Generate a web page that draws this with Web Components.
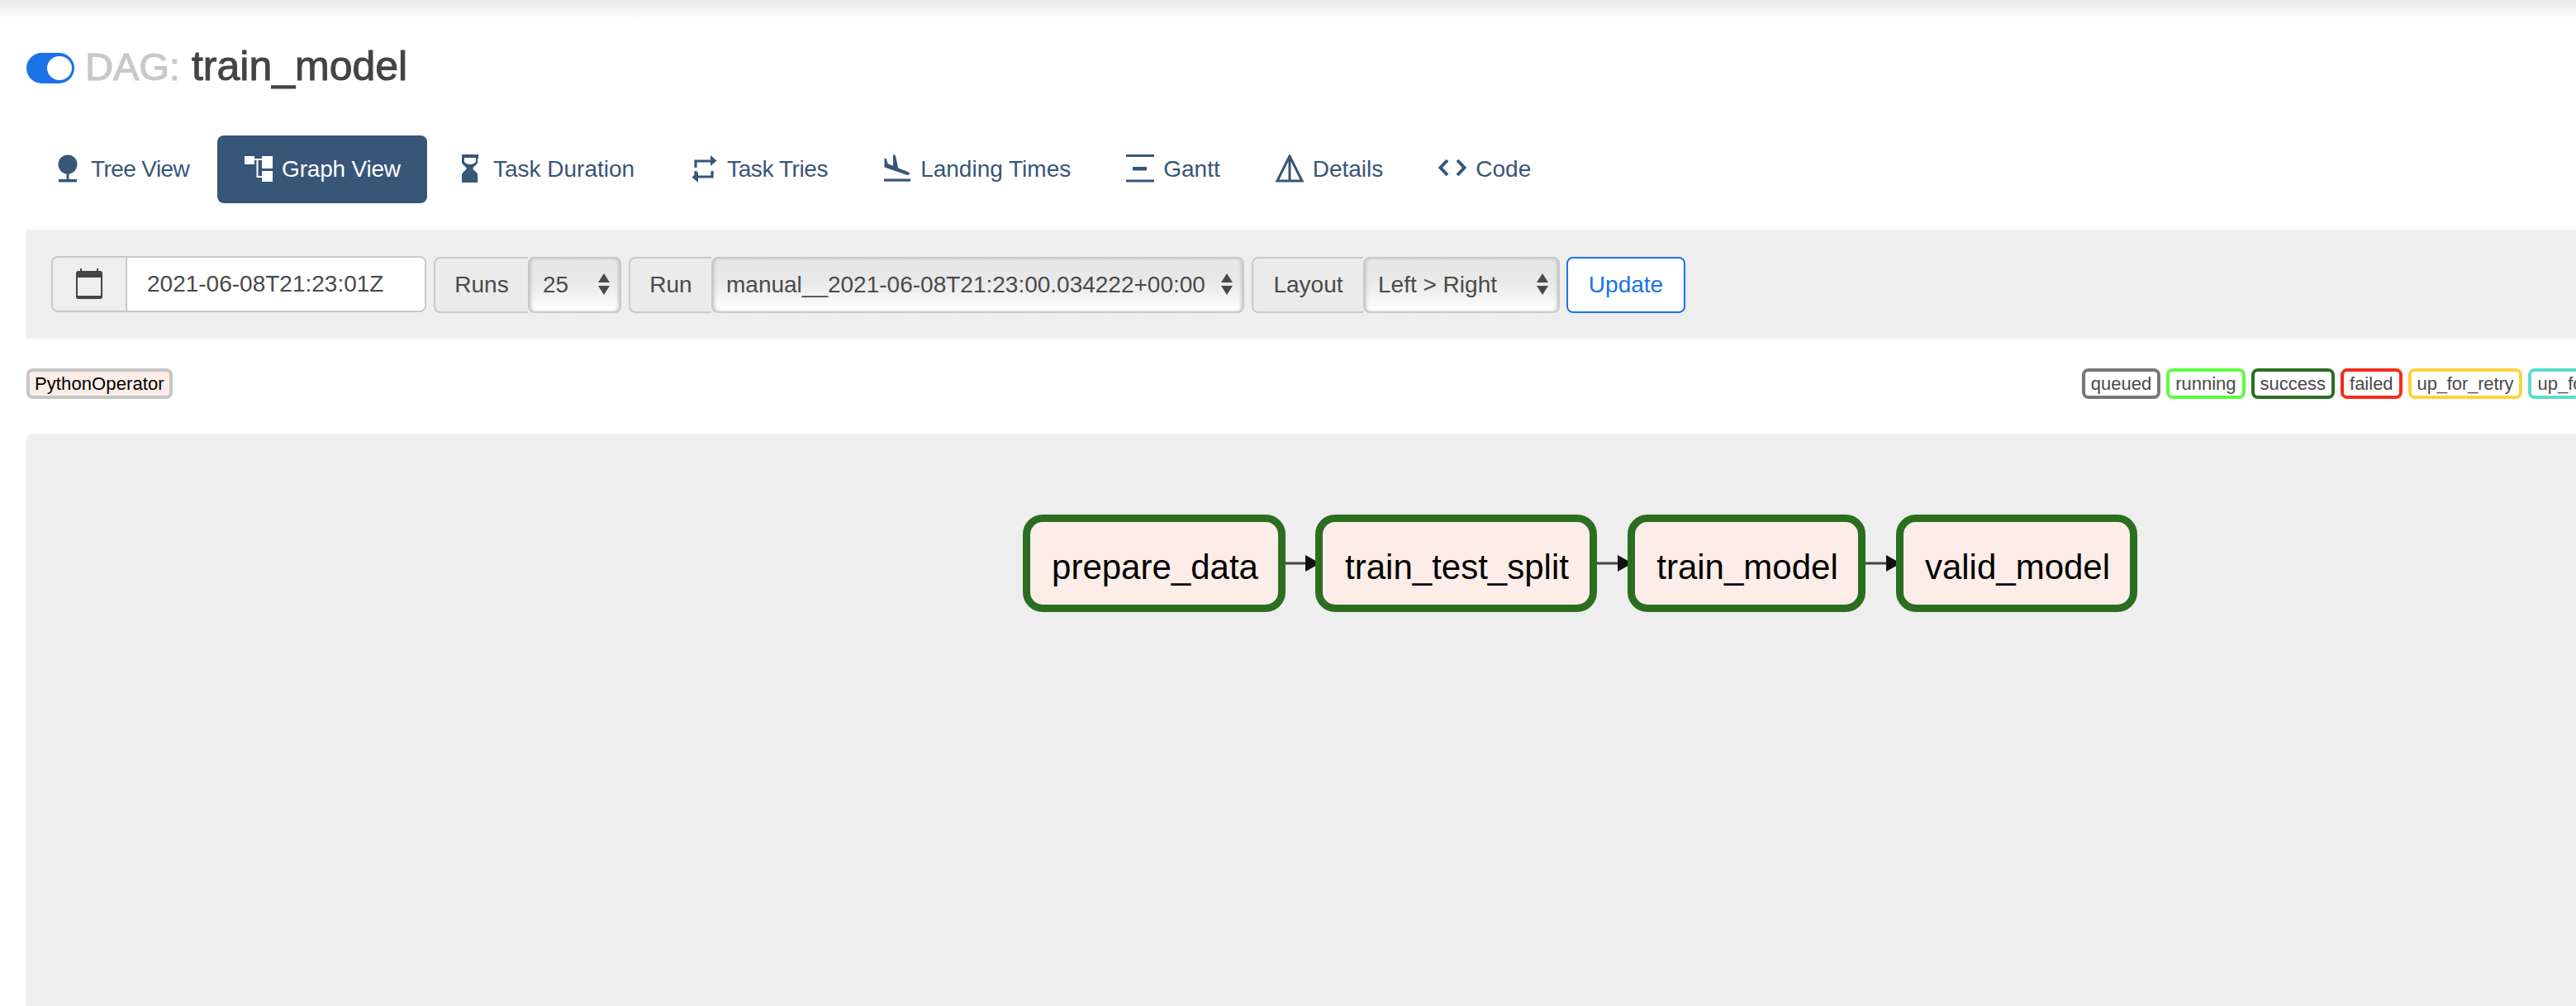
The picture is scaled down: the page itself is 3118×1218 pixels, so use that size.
<!DOCTYPE html>
<html>
<head>
<meta charset="utf-8">
<title>train_model</title>
<style>
    html, body { margin: 0; padding: 0; background: #fff; overflow: hidden; }
    body { width: 3118px; height: 1218px; font-family: "Liberation Sans", Arial, sans-serif; color: #4a4a4a; }
</style>
</head>
<body>
<af-page>
    <af-header dag="train_model"></af-header>
    <af-tabs>
        <af-tab icon="tree" style="letter-spacing: -.6px">Tree View</af-tab>
        <af-tab icon="graph" active style="letter-spacing: -.2px">Graph View</af-tab>
        <af-tab icon="hourglass">Task Duration</af-tab>
        <af-tab icon="repeat" style="letter-spacing: -.4px">Task Tries</af-tab>
        <af-tab icon="plane">Landing Times</af-tab>
        <af-tab icon="gantt">Gantt</af-tab>
        <af-tab icon="sail">Details</af-tab>
        <af-tab icon="code">Code</af-tab>
    </af-tabs>
    <af-filter>
        <af-date value="2021-06-08T21:23:01Z"></af-date>
        <af-select label="Runs" label-width="114" width="113">25</af-select>
        <af-select label="Run" label-width="100" width="645">manual__2021-06-08T21:23:00.034222+00:00</af-select>
        <af-select label="Layout" label-width="135" width="238">Left &gt; Right</af-select>
        <af-button>Update</af-button>
    </af-filter>
    <af-legend>
        <af-chip slot="left" color="#c5c5c5" fill="#fcede8" ink="#000" style="letter-spacing: .1px; padding: 0 6px">PythonOperator</af-chip>
        <af-chip color="#777777">queued</af-chip>
        <af-chip color="#5cff3f">running</af-chip>
        <af-chip color="#2b6e20">success</af-chip>
        <af-chip color="#f52d1c">failed</af-chip>
        <af-chip color="#ffd23c" style="letter-spacing: -.15px">up_for_retry</af-chip>
        <af-chip color="#5cdccb">up_for_reschedule</af-chip>
    </af-legend>
    <af-graph>
        <af-node x="1206" w="318">prepare_data</af-node>
        <af-edge x="1524" w="36"></af-edge>
        <af-node x="1560" w="341">train_test_split</af-node>
        <af-edge x="1901" w="37"></af-edge>
        <af-node x="1938" w="288">train_model</af-node>
        <af-edge x="2226" w="37"></af-edge>
        <af-node x="2263" w="292">valid_model</af-node>
    </af-graph>
</af-page>

<script>
const ICONS = {
    tree: `<circle cx="18" cy="12" r="11.5"/><rect x="16.5" y="22" width="3" height="9"/><rect x="7" y="30" width="22" height="3.5"/>`,
    graph: `<rect x="1" y="2" width="12" height="10"/><rect x="22" y="2" width="13" height="15"/><rect x="22" y="20" width="13" height="13"/><path d="M13 6h9M16.5 6v21h5.5" fill="none" stroke="currentColor" stroke-width="2"/>`,
    hourglass: `<path d="M8 0h20v4.500l-.8.5v4.500c0 3-5.700 5.200-5.700 7.500s5.700 4.500 5.700 7.500v9.500H8v-9.500c0-3 5.700-5.200 5.700-7.500S8 12.500 8 9.500V5L8 4.500zM11 4v4.500c0 1.500 3.500 3.500 7 3.500s7-2 7-3.500V4z" fill-rule="evenodd"/>`,
    repeat: `<path d="M8 16v-8h19M8 20v7h-.5M28 20v7H10" fill="none" stroke="currentColor" stroke-width="3.200"/><path d="M26 1l7.500 6.500-7.500 6.500zM11 21l-7.500 6.500L11 34z"/>`,
    plane: `<path d="M13 0l2.800 1 3.500 15.500 11.500 4.500c2.500 1 3 3.200 1.500 3.700-1.500.4-3.500-.2-5-.8L2.500 15.500V4.500l2.300.8 1.900 6 6.300 2.500z"/><rect x="2" y="29.500" width="32" height="3.200"/>`,
    gantt: `<rect x="1" y="0" width="34" height="3"/><rect x="9" y="15" width="17" height="4.500"/><rect x="1" y="30.500" width="34" height="3"/>`,
    sail: `<path d="M18 2L3 32h30zM18 2v30" fill="none" stroke="currentColor" stroke-width="3"/>`,
    code: `<path d="M12 7L3.500 16l8.500 9M24 7l8.500 9-8.500 9" fill="none" stroke="currentColor" stroke-width="4"/>`
};

class AfPage extends HTMLElement {
    constructor() {
        super();
        this.attachShadow({ mode: 'open' });
        this.shadowRoot.innerHTML = `
            <style>
                :host { display: block; height: 1218px; overflow: hidden; }
                .shade { height: 24px; background: linear-gradient(#e9e9e9, #fff); }
                main { padding: 0 0 0 32px; }
            </style>
            <div class="shade"></div>
            <main><slot></slot></main>
        `;
    }
}

class AfHeader extends HTMLElement {
    constructor() {
        super();
        this.attachShadow({ mode: 'open' });
        this.shadowRoot.innerHTML = `
            <style>
                :host { display: flex; align-items: center; height: 112px; gap: 13px; }
                .toggle {
                    box-sizing: border-box; width: 58px; height: 37px; margin-top: 4px;
                    border-radius: 19px; background: #1a73e8; position: relative;
                }
                .toggle i {
                    position: absolute; right: 3px; top: 4px; width: 30px; height: 29px;
                    border-radius: 50%; background: #fff;
                }
                h4 { margin: 0; font-size: 50px; font-weight: 400; line-height: 60px; color: #444; -webkit-text-stroke: 1px #444; white-space: nowrap; }
                h4 span { font-size: 47px; color: #c8c8c8; -webkit-text-stroke: 1px #c8c8c8; margin-right: 14px; }
            </style>
            <div class="toggle"><i></i></div>
            <h4><span>DAG:</span>${this.getAttribute('dag')}</h4>
        `;
    }
}

class AfTabs extends HTMLElement {
    constructor() {
        super();
        this.attachShadow({ mode: 'open' });
        this.shadowRoot.innerHTML = `
            <style>
                :host { display: flex; gap: 2px; margin-top: 28px; height: 82px; }
            </style>
            <slot></slot>
        `;
    }
}

class AfTab extends HTMLElement {
    constructor() {
        super();
        this.attachShadow({ mode: 'open' });
        this.shadowRoot.innerHTML = `
            <style>
                :host {
                    display: flex; align-items: center; gap: 10px; padding: 0 32px;
                    font-size: 28px; color: #375678; border-radius: 8px; white-space: nowrap;
                }
                :host([active]) { background: #375678; color: #fff; }
                svg { width: 36px; height: 36px; fill: currentColor; display: block; flex: none; }
            </style>
            <svg viewBox="0 0 36 36">${ICONS[this.getAttribute('icon')]}</svg>
            <slot></slot>
        `;
    }
}

class AfFilter extends HTMLElement {
    constructor() {
        super();
        this.attachShadow({ mode: 'open' });
        this.shadowRoot.innerHTML = `
            <style>
                :host {
                    display: flex; gap: 9px; align-items: center; box-sizing: border-box;
                    width: 3200px; height: 132px; margin-top: 32px; padding-left: 30px;
                    background: #eeeeee; font-size: 28px;
                }
            </style>
            <slot></slot>
        `;
    }
}

class AfDate extends HTMLElement {
    constructor() {
        super();
        this.attachShadow({ mode: 'open' });
        this.shadowRoot.innerHTML = `
            <style>
                :host {
                    display: flex; box-sizing: border-box; width: 454px; height: 68px;
                    border: 2px solid #c8c8c8; border-radius: 8px; overflow: hidden;
                }
                .addon {
                    box-sizing: border-box; width: 90px; background: #eeeeee; border-right: 2px solid #c8c8c8;
                    display: flex; align-items: center; justify-content: center;
                }
                .addon svg { width: 34px; height: 38px; display: block; }
                .value { flex: 1; background: #fff; display: flex; align-items: center; padding-left: 24px; color: #4a4a4a; }
            </style>
            <div class="addon">
                <svg viewBox="0 0 34 38">
                    <path d="M6 0h2v4H6zM26 0h2v4h-2z" fill="#444"/>
                    <rect x="1" y="3" width="32" height="34" rx="3" fill="#444"/>
                    <rect x="3" y="11" width="28" height="22" fill="#eeeeee"/>
                </svg>
            </div>
            <div class="value">${this.getAttribute('value')}</div>
        `;
    }
}

class AfSelect extends HTMLElement {
    constructor() {
        super();
        this.attachShadow({ mode: 'open' });
        this.shadowRoot.innerHTML = `
            <style>
                :host { display: flex; height: 68px; box-sizing: border-box; margin-top: 2px; }
                .label {
                    box-sizing: border-box; width: ${this.getAttribute('label-width')}px; height: 68px;
                    display: flex; align-items: center; justify-content: center;
                    background: #ebebeb; border: 2px solid #c8c8c8; border-right: 0; border-radius: 8px 0 0 8px;
                }
                .box {
                    box-sizing: border-box; width: ${this.getAttribute('width')}px; height: 68px;
                    display: flex; align-items: center; padding-left: 16px; position: relative; white-space: nowrap;
                    border: 2px solid #c8c8c8; border-radius: 8px;
                    background: linear-gradient(#e6e6e6 0, #e9e9e9 45%, #fff 100%);
                    box-shadow: inset 3px 0 4px -2px #bbb, inset -3px 0 4px -2px #bbb;
                }
                svg { position: absolute; right: 12px; top: 18px; width: 14px; height: 26px; fill: #4a4a4a; }
            </style>
            <div class="label">${this.getAttribute('label')}</div>
            <div class="box">
                <slot></slot>
                <svg viewBox="0 0 14 26"><path d="M7 0l7 11H0zM7 26L0 15h14z"/></svg>
            </div>
        `;
    }
}

class AfButton extends HTMLElement {
    constructor() {
        super();
        this.attachShadow({ mode: 'open' });
        this.shadowRoot.innerHTML = `
            <style>
                :host {
                    display: flex; align-items: center; justify-content: center; box-sizing: border-box;
                    width: 144px; height: 68px; margin: 2px 0 0 -1px; background: #fff; color: #1a73e8;
                    border: 2px solid #1a73e8; border-radius: 8px;
                }
            </style>
            <slot></slot>
        `;
    }
}

class AfLegend extends HTMLElement {
    constructor() {
        super();
        this.attachShadow({ mode: 'open' });
        this.shadowRoot.innerHTML = `
            <style>
                :host { display: flex; height: 37px; margin-top: 36px; width: 3300px; }
                .states { display: flex; gap: 7px; margin-left: 2311px; }
            </style>
            <slot name="left"></slot>
            <div class="states"><slot></slot></div>
        `;
    }
}

class AfChip extends HTMLElement {
    constructor() {
        super();
        this.attachShadow({ mode: 'open' });
        const fill = this.getAttribute('fill') || '#fff';
        const ink = this.getAttribute('ink') || '#4a4a4a';
        this.shadowRoot.innerHTML = `
            <style>
                :host {
                    display: flex; align-items: center; box-sizing: border-box; height: 37px; padding: 0 7px;
                    border: 4px solid ${this.getAttribute('color')}; border-radius: 8px;
                    background: ${fill}; color: ${ink}; font-size: 22px; white-space: nowrap;
                }
            </style>
            <slot></slot>
        `;
    }
}

class AfGraph extends HTMLElement {
    constructor() {
        super();
        this.attachShadow({ mode: 'open' });
        this.shadowRoot.innerHTML = `
            <style>
                :host {
                    display: block; position: relative; width: 3200px; height: 800px; margin-top: 42px;
                    background: #eeeeee; border-radius: 8px 0 0 0;
                }
            </style>
            <slot></slot>
        `;
    }
}

class AfNode extends HTMLElement {
    constructor() {
        super();
        this.attachShadow({ mode: 'open' });
        this.shadowRoot.innerHTML = `
            <style>
                :host {
                    position: absolute; top: 98px; left: ${this.getAttribute('x')}px;
                    width: ${this.getAttribute('w')}px; height: 118px; box-sizing: border-box;
                    display: flex; align-items: center; justify-content: center;
                    border: 9px solid #2b6e20; border-radius: 24px; background: #fcede8;
                    color: #000; font-size: 42px; padding: 10px 0 0 2px;
                }
            </style>
            <slot></slot>
        `;
    }
}

class AfEdge extends HTMLElement {
    constructor() {
        super();
        this.attachShadow({ mode: 'open' });
        const w = +this.getAttribute('w');
        // the arrow tip runs under the next node, which paints after it
        this.shadowRoot.innerHTML = `
            <style>
                :host { position: absolute; top: 147px; left: ${this.getAttribute('x')}px; width: ${w + 6}px; height: 20px; }
                svg { display: block; }
            </style>
            <svg width="${w + 6}" height="20" viewBox="0 0 ${w + 6} 20">
                <path d="M0 10H${w - 10}" stroke="#444" stroke-width="3"/>
                <path d="M${w - 12} 0L${w + 6} 10L${w - 12} 20z" fill="#111"/>
            </svg>
        `;
    }
}

customElements.define('af-page', AfPage);
customElements.define('af-header', AfHeader);
customElements.define('af-tabs', AfTabs);
customElements.define('af-tab', AfTab);
customElements.define('af-filter', AfFilter);
customElements.define('af-date', AfDate);
customElements.define('af-select', AfSelect);
customElements.define('af-button', AfButton);
customElements.define('af-legend', AfLegend);
customElements.define('af-chip', AfChip);
customElements.define('af-graph', AfGraph);
customElements.define('af-node', AfNode);
customElements.define('af-edge', AfEdge);
</script>
</body>
</html>
